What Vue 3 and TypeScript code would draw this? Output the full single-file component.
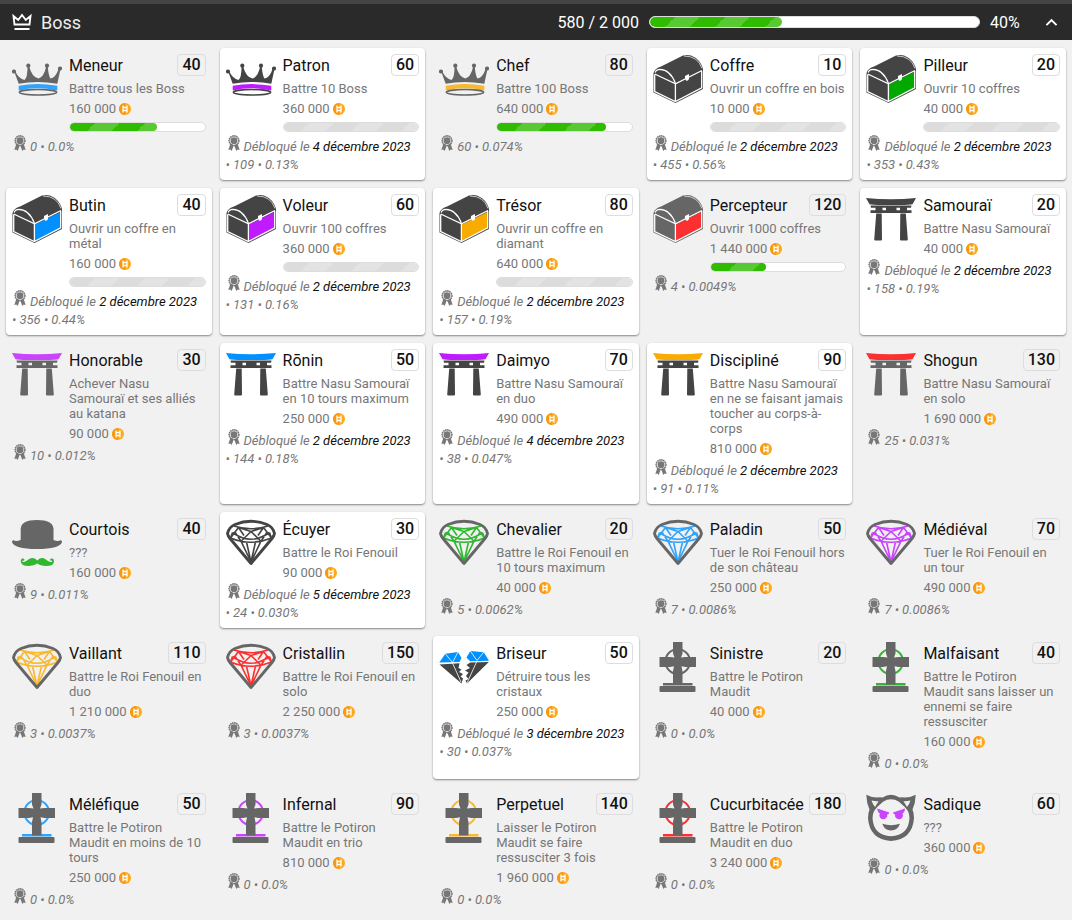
<script setup lang="ts">
import { ref } from 'vue'

type IconName = 'crown' | 'chest' | 'torii' | 'hat' | 'diamond' | 'broken' | 'cross' | 'devil'

interface Achievement {
  name: string
  points: number
  text: string
  coins: string
  icon: IconName
  color: string
  stats: string
  date?: string
  progress?: number
}

const NONE = '#444'
const BLUE = '#0090ff'
const PURPLE = '#c01aff'
const GOLD = '#faab00'
const GREEN = '#00a900'
const RED = '#ff0000'

const open = ref(true)
const total = 40

const achievements: Achievement[] = [
  { name: 'Meneur', points: 40, text: 'Battre tous les Boss', coins: '160 000', icon: 'crown', color: BLUE, stats: '0 • 0.0%', progress: 65 },
  { name: 'Patron', points: 60, text: 'Battre 10 Boss', coins: '360 000', icon: 'crown', color: PURPLE, stats: '109 • 0.13%', date: '4 décembre 2023', progress: 100 },
  { name: 'Chef', points: 80, text: 'Battre 100 Boss', coins: '640 000', icon: 'crown', color: GOLD, stats: '60 • 0.074%', progress: 81 },
  { name: 'Coffre', points: 10, text: 'Ouvrir un coffre en bois', coins: '10 000', icon: 'chest', color: NONE, stats: '455 • 0.56%', date: '2 décembre 2023', progress: 100 },
  { name: 'Pilleur', points: 20, text: 'Ouvrir 10 coffres', coins: '40 000', icon: 'chest', color: GREEN, stats: '353 • 0.43%', date: '2 décembre 2023', progress: 100 },
  { name: 'Butin', points: 40, text: 'Ouvrir un coffre en métal', coins: '160 000', icon: 'chest', color: BLUE, stats: '356 • 0.44%', date: '2 décembre 2023', progress: 100 },
  { name: 'Voleur', points: 60, text: 'Ouvrir 100 coffres', coins: '360 000', icon: 'chest', color: PURPLE, stats: '131 • 0.16%', date: '2 décembre 2023', progress: 100 },
  { name: 'Trésor', points: 80, text: 'Ouvrir un coffre en diamant', coins: '640 000', icon: 'chest', color: GOLD, stats: '157 • 0.19%', date: '2 décembre 2023', progress: 100 },
  { name: 'Percepteur', points: 120, text: 'Ouvrir 1000 coffres', coins: '1 440 000', icon: 'chest', color: RED, stats: '4 • 0.0049%', progress: 41 },
  { name: 'Samouraï', points: 20, text: 'Battre Nasu Samouraï', coins: '40 000', icon: 'torii', color: NONE, stats: '158 • 0.19%', date: '2 décembre 2023' },
  { name: 'Honorable', points: 30, text: 'Achever Nasu Samouraï et ses alliés au katana', coins: '90 000', icon: 'torii', color: PURPLE, stats: '10 • 0.012%' },
  { name: 'Rōnin', points: 50, text: 'Battre Nasu Samouraï en 10 tours maximum', coins: '250 000', icon: 'torii', color: BLUE, stats: '144 • 0.18%', date: '2 décembre 2023' },
  { name: 'Daimyo', points: 70, text: 'Battre Nasu Samouraï en duo', coins: '490 000', icon: 'torii', color: PURPLE, stats: '38 • 0.047%', date: '4 décembre 2023' },
  { name: 'Discipliné', points: 90, text: 'Battre Nasu Samouraï en ne se faisant jamais toucher au corps-à-corps', coins: '810 000', icon: 'torii', color: GOLD, stats: '91 • 0.11%', date: '2 décembre 2023' },
  { name: 'Shogun', points: 130, text: 'Battre Nasu Samouraï en solo', coins: '1 690 000', icon: 'torii', color: RED, stats: '25 • 0.031%' },
  { name: 'Courtois', points: 40, text: '???', coins: '160 000', icon: 'hat', color: GREEN, stats: '9 • 0.011%' },
  { name: 'Écuyer', points: 30, text: 'Battre le Roi Fenouil', coins: '90 000', icon: 'diamond', color: NONE, stats: '24 • 0.030%', date: '5 décembre 2023' },
  { name: 'Chevalier', points: 20, text: 'Battre le Roi Fenouil en 10 tours maximum', coins: '40 000', icon: 'diamond', color: GREEN, stats: '5 • 0.0062%' },
  { name: 'Paladin', points: 50, text: 'Tuer le Roi Fenouil hors de son château', coins: '250 000', icon: 'diamond', color: BLUE, stats: '7 • 0.0086%' },
  { name: 'Médiéval', points: 70, text: 'Tuer le Roi Fenouil en un tour', coins: '490 000', icon: 'diamond', color: PURPLE, stats: '7 • 0.0086%' },
  { name: 'Vaillant', points: 110, text: 'Battre le Roi Fenouil en duo', coins: '1 210 000', icon: 'diamond', color: GOLD, stats: '3 • 0.0037%' },
  { name: 'Cristallin', points: 150, text: 'Battre le Roi Fenouil en solo', coins: '2 250 000', icon: 'diamond', color: RED, stats: '3 • 0.0037%' },
  { name: 'Briseur', points: 50, text: 'Détruire tous les cristaux', coins: '250 000', icon: 'broken', color: BLUE, stats: '30 • 0.037%', date: '3 décembre 2023' },
  { name: 'Sinistre', points: 20, text: 'Battre le Potiron Maudit', coins: '40 000', icon: 'cross', color: NONE, stats: '0 • 0.0%' },
  { name: 'Malfaisant', points: 40, text: 'Battre le Potiron Maudit sans laisser un ennemi se faire ressusciter', coins: '160 000', icon: 'cross', color: GREEN, stats: '0 • 0.0%' },
  { name: 'Méléfique', points: 50, text: 'Battre le Potiron Maudit en moins de 10 tours', coins: '250 000', icon: 'cross', color: BLUE, stats: '0 • 0.0%' },
  { name: 'Infernal', points: 90, text: 'Battre le Potiron Maudit en trio', coins: '810 000', icon: 'cross', color: PURPLE, stats: '0 • 0.0%' },
  { name: 'Perpetuel', points: 140, text: 'Laisser le Potiron Maudit se faire ressusciter 3 fois', coins: '1 960 000', icon: 'cross', color: GOLD, stats: '0 • 0.0%' },
  { name: 'Cucurbitacée', points: 180, text: 'Battre le Potiron Maudit en duo', coins: '3 240 000', icon: 'cross', color: RED, stats: '0 • 0.0%' },
  { name: 'Sadique', points: 60, text: '???', coins: '360 000', icon: 'devil', color: PURPLE, stats: '0 • 0.0%' },
]
</script>

<template>
  <main class="page">
    <header class="bar">
      <svg class="bar-icon" viewBox="0 0 20 18" aria-hidden="true">
        <path d="M2.500 11.500 1.500 3 6.200 7 10 2 13.800 7l4.700-4-1 8.500z" fill="none" stroke="#fff" stroke-width="1.900" />
        <path d="M2.500 15h15v2h-15z" fill="#fff" />
      </svg>
      <h1 class="bar-title">Boss</h1>
      <span class="bar-score">580 / 2 000</span>
      <div class="track track-large" role="progressbar" aria-label="Boss" :aria-valuenow="total" aria-valuemin="0" aria-valuemax="100">
        <div class="fill" :style="{ width: total + '%' }"></div>
      </div>
      <span class="bar-percent">{{ total }}%</span>
      <button class="toggle" type="button" aria-label="Boss" :aria-expanded="open" @click="open = !open">
        <svg viewBox="0 0 24 24" :class="{ flipped: !open }">
          <path d="M7.410 15.410 12 10.830l4.590 4.580L18 14l-6-6-6 6z" fill="#fff" />
        </svg>
      </button>
    </header>

    <section v-if="open" class="grid">
      <article v-for="a in achievements" :key="a.name" class="card" :class="{ unlocked: a.date }">
        <div class="head">
          <svg class="icon" viewBox="0 0 50 50" aria-hidden="true">
            <g v-if="a.icon === 'crown'">
              <g fill="#444">
                <circle cx="2" cy="17.500" r="2.100" />
                <circle cx="16.300" cy="11.700" r="2.100" />
                <circle cx="35" cy="11.700" r="2.100" />
                <circle cx="48" cy="14.500" r="2.100" />
                <path d="M2 17 6.700 29.800Q25 26 45.300 29.800L48.500 15 46.800 14.500Q43.500 24 38.500 24.500 36.500 22 35.700 12h-1.400Q32 23 26.500 24.500 20 23.500 17 12h-1.400Q15.500 24 12.500 26 7 25 3 17z" />
              </g>
              <path d="M6.700 31.700Q25 28.500 45.300 31.700V36.500Q25 32 6.700 36.500z" :fill="a.color" />
              <ellipse cx="26" cy="38.300" rx="18.700" ry="2.700" fill="none" stroke="#444" stroke-width="1.500" />
            </g>

            <g v-else-if="a.icon === 'chest'">
              <path d="M.5 19Q2 14 8 12.500L30 1.500Q34 .3 38 1.500 47 5 50 14.500V35L22.500 49 .5 38.500z" fill="#444" />
              <path d="M22.800 30.500 48.500 18V34L22.800 46.800z" :fill="a.color" />
              <g fill="none" stroke="#fff" stroke-width="1.300">
                <path d="M1.700 20 22.500 29.800 49 16.500M1.700 20.500V37.600L22.300 47.500 48.700 33.900V17M22.400 30V47.500" />
                <path d="M2.200 18.500Q3 15.500 7 15.300 17 15.500 22.300 29" />
                <path d="M31 2Q45 2 49 14.500" stroke-width=".7" />
              </g>
              <path d="M32 24.500v-2.500l4-2v5q-1 2.500-3 1.500z" fill="#fff" />
            </g>

            <g v-else-if="a.icon === 'torii'">
              <path d="M0 4Q25 6.500 50 4L46.500 10.300Q44 11.300 25 11 6 11.300 3.500 10.300z" :fill="a.color" />
              <g fill="#444">
                <path d="M4.500 11.500h41l-.5 2.200h-40z" />
                <path d="M4.500 16.200h41v2.800h-41z" />
                <path d="M9.500 13h7v4h-7zM20 13h10.500v4H20zM34 13h7v4h-7z" />
                <path d="M10.200 19.500h5.500L16 45.500q0 1-1 1H9.200q-1 0-1-1zM34.300 19.500h5.500l2 26q0 1-1 1H35q-1 0-1-1z" />
              </g>
            </g>

            <g v-else-if="a.icon === 'hat'">
              <path d="M8.700 22V11Q9 2 25 2T41.500 11V22Q45 23.500 47 22.800 50 21.500 50 24 48 31 25 31T0 24Q0 21.500 3 22.800 5 23.500 8.700 22z" fill="#444" />
              <path d="M25.300 42.500Q22 39 18 40.500 14.500 43 12 44 10 44.500 10.500 42.500 12 43.200 12.500 41.700 12 40 10 40.500 8.500 41.500 8.800 43.500 9.500 47.500 14 47.800 21.500 48.500 25.300 45.500 29 48.500 37 47.800 41.500 47.500 42 43.500 42 41 40.500 40.500 38.500 40 38 41.700 38.500 43.200 40 42.500 40.500 44.500 38.500 44 36 43.500 32.500 40.500 28.500 39 25.300 42.500z" :fill="a.color" />
            </g>

            <g v-else-if="a.icon === 'diamond'" fill="none" stroke-linejoin="round">
              <path d="M6.500 14.500Q25 28 43.500 14.500M6.500 14.500 4.500 20Q25 28.500 45.500 20L43.500 14.500M8 8Q25 13.500 42 8M4.500 20 12.500 9.500 25 13.500 37.500 9.500 45.500 20M15 23.200 8.500 13.500M15 23.200 25 13.500 35 23.200 41.500 13.500M12.500 9.500 18 17.500M37.500 9.500 32 17.500M15 23.200 25 44 35 23.200M20.500 24 25 44 29.500 24" :stroke="a.color" stroke-width="1.600" />
              <path d="M1.500 15.500Q3 9 9 6.500 17 3.300 25 3.300T41 6.500Q47 9 48.500 15.500 48 18 46 20.500L25 45.500 4 20.500Q2 18 1.500 15.500z" stroke="#444" stroke-width="2.900" />
            </g>

            <g v-else-if="a.icon === 'broken'">
              <path d="M.3 20.500 6.300 11.700 19 10 22.500 16 20.500 20z" :fill="a.color" />
              <path d="M27.500 15.500 31.300 9 44.700 10.200 50 18.800 31 19.300z" :fill="a.color" />
              <path d="M.5 22.500 20.500 21.300 19.500 26 22.500 27.500 20 30 24 32 21.500 34.500 24 36.500 22.500 41.500z" fill="#444" />
              <path d="M31.300 20.600 49.800 20 28 41.500 26.500 38.500 29.500 37 27 34 29.500 30.500 26 28.500 31 26 27.500 23z" fill="#444" />
              <path d="M6.300 11.700 13.500 20.500 19 10M13.500 21 22 40M31.300 9 38 18.500 44.700 10.200M38 19 28 41" fill="none" stroke="#fff" stroke-width=".8" />
            </g>

            <g v-else-if="a.icon === 'cross'">
              <circle cx="24.700" cy="19.500" r="12.300" fill="none" :stroke="a.color" stroke-width="2" />
              <path d="M10 41h29.500v2.500H10z" :fill="a.color" />
              <g fill="#444">
                <path d="M20 0h9.500v11.500l-1.500 4 4.500-.5H43v10H32.500l-4-.8 1 5V42.500H20V29l1-4.800-4 .8H6.500V15H17l4.500.5-1.500-4z" />
                <rect x="6.500" y="44" width="36" height="6" rx="1" />
              </g>
            </g>

            <g v-else>
              <path fill-rule="evenodd" d="M.3 1.700Q6 5 14 4.300L16.500 4.500Q25-.8 33.500 4.500L36 4.300Q44 5 49.700 1.700 49.500 10 46.500 16.500 48 20 48 25 46.500 46.500 25 48 3.500 46.500 2 25 2 20 3.500 16.500.5 10 .3 1.700zM5.500 7.500Q7 12 9 14L12.500 8.300Q9 8.500 5.500 7.500zM44.500 7.500Q41 8.500 37.500 8.300L41 14Q43 12 44.500 7.500zM14 11.500Q6.500 17 6.500 25 7.500 42.500 25 43.300 42.500 42.500 43.500 25 43.500 17 36 11.500L33 8.700Q25 4 17 8.700z" fill="#444" />
              <path d="M11.300 15.500 23.300 19.500 22.500 21.200H21.200A4 4 0 1 1 13.800 20.500Q11.500 19.500 11.300 15.500zM39 15.500 27 19.500 27.800 21.200H29.100A4 4 0 1 0 36.500 20.500Q38.800 19.500 39 15.500z" :fill="a.color" />
              <path d="M16.300 30.800Q25 33.500 34 30.800 31.500 37.500 25 37.500T16.300 30.800z" fill="#444" />
            </g>
          </svg>

          <div class="body">
            <div class="title-row">
              <h2 class="name">{{ a.name }}</h2>
              <span class="points">{{ a.points }}</span>
            </div>
            <p class="text">{{ a.text }}</p>
            <div class="coins">
              <span>{{ a.coins }}</span>
              <svg class="coin" viewBox="0 0 12 12" aria-hidden="true">
                <circle cx="6" cy="6" r="6" fill="#ffa91a" />
                <path d="M6 0a6 6 0 0 0 0 12z" fill="#f8980f" />
                <path d="M4 2.500v7M8 2.500v7M4 4.500h4M4 7.500h4" stroke="#fff" stroke-width="1.300" fill="none" />
              </svg>
            </div>
            <div
              v-if="a.progress"
              class="track"
              :class="{ done: a.progress === 100 }"
              role="progressbar"
              :aria-label="a.name"
              :aria-valuenow="a.progress"
              aria-valuemin="0"
              aria-valuemax="100"
            >
              <div class="fill" :style="{ width: a.progress + '%' }"></div>
            </div>
          </div>
        </div>

        <p class="stats">
          <svg class="medal" viewBox="0 0 12 16" aria-hidden="true">
            <path d="M2.500 8.500 .3 15l2-.4 1.400 1.400L5.700 10.500zM9.500 8.500l2.200 6.500-2-.4L8.300 16 6.300 10.500z" fill="#777" />
            <circle cx="6" cy="5.700" r="5" fill="none" stroke="#777" stroke-width="1.300" stroke-dasharray="1.500 .6" />
            <circle cx="6" cy="5.700" r="4.500" fill="none" stroke="#777" stroke-width=".7" />
            <circle cx="6" cy="5.700" r="3.400" fill="#777" />
          </svg>
          <template v-if="a.date">Débloqué le <time class="date">{{ a.date }}</time>{{ ' ' }}</template>
          <span class="counts">{{ a.date ? '• ' + a.stats : a.stats }}</span>
        </p>
      </article>
    </section>
  </main>
</template>

<style>
body {
  background: #f1f1f1;
}
</style>

<style scoped>
.page {
  font-family: Roboto, "Liberation Sans", sans-serif;
  color: #111;
  border-top: 4px solid #444;
}

.bar {
  display: flex;
  align-items: center;
  height: 36px;
  padding: 0 9px 0 12px;
  background: #2a2a2a;
  color: #fff;
  font-size: 16px;
}

.bar-icon {
  width: 20px;
  height: 18px;
  margin-right: 9px;
}

.bar-title {
  flex: 1;
  margin: 0;
  font-size: 18px;
  font-weight: 400;
  color: #eee;
}

.bar-score {
  margin-right: 10px;
}

.bar-percent {
  width: 36px;
  margin-left: 10px;
}

.toggle {
  display: flex;
  margin-left: 14px;
  padding: 0;
  border: 0;
  background: none;
  cursor: pointer;
}

.toggle svg {
  width: 23px;
  height: 23px;
}

.flipped {
  transform: rotate(180deg);
}

.track {
  box-sizing: border-box;
  height: 10px;
  margin-top: 6px;
  border: 1px solid #ddd;
  border-radius: 5px;
  background: #fff;
  overflow: hidden;
}

.track-large {
  flex: none;
  width: 31.5%;
  height: 12px;
  margin-top: 0;
  border-radius: 6px;
}

.fill {
  height: 100%;
  border-radius: 5px;
  background-color: #2fbb00;
  background-image: linear-gradient(
    -45deg,
    rgba(255, 255, 255, 0.2) 25%,
    transparent 25%,
    transparent 50%,
    rgba(255, 255, 255, 0.2) 50%,
    rgba(255, 255, 255, 0.2) 75%,
    transparent 75%
  );
  background-size: 50px 50px;
}

.done .fill {
  background-color: #dcdcdc;
}

.grid {
  display: grid;
  grid-template-columns: repeat(5, minmax(0, 1fr));
  gap: 8px;
  padding: 8px 6px;
}

.card {
  padding: 6px;
  border-radius: 4px;
}

.unlocked {
  background: #fff;
  box-shadow: 0 1px 2px rgba(0, 0, 0, 0.45);
}

.head {
  display: flex;
  gap: 7px;
}

.icon {
  flex: none;
  width: 50px;
  height: 50px;
  opacity: 0.8;
}

.unlocked .icon {
  opacity: 1;
}

.body {
  flex: 1;
  min-width: 0;
}

.title-row {
  display: flex;
  justify-content: space-between;
  align-items: center;
  height: 22px;
  margin-bottom: 5px;
}

.name {
  margin: 0;
  font-size: 16px;
  font-weight: 400;
}

.points {
  box-sizing: border-box;
  height: 22px;
  padding: 0 4px;
  border: 1px solid #ddd;
  border-radius: 4px;
  font-size: 16px;
  line-height: 20px;
  font-weight: 500;
}

.text {
  margin: 0 0 5px;
  padding-right: 1px;
  font-size: 13px;
  line-height: 15px;
  color: #777;
}

.coins {
  display: flex;
  align-items: center;
  gap: 3px;
  font-size: 13px;
  line-height: 15px;
  color: #777;
}

.coin {
  width: 12px;
  height: 12px;
}

.stats {
  margin: 6px 0 0;
  font-size: 13px;
  line-height: 18px;
  font-style: italic;
  color: #777;
}

.medal {
  width: 12px;
  height: 16px;
  margin: -3px 4px 0 2px;
  vertical-align: baseline;
}

.counts {
  white-space: nowrap;
}

.date {
  color: #111;
}
</style>
